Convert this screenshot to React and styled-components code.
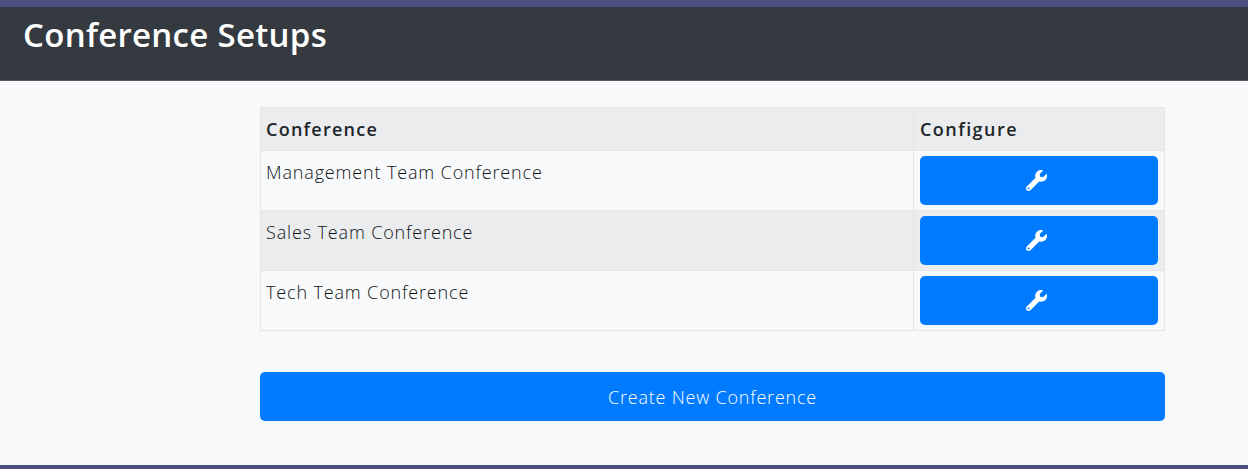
import React from "react";
import styled, { createGlobalStyle } from "styled-components";
import { FaWrench } from "react-icons/fa";

const GlobalStyle = createGlobalStyle`
    html, body {
        margin: 0;
        padding: 0;
        background: #4a4f80;
    }
    body {
        font-family: "Open Sans", "Noto Sans", sans-serif;
        color: #212529;
    }
`;

const Page = styled.div`
    width: 1248px;
    height: 469px;
    padding-top: 7px;
    box-sizing: border-box;
    background: #4a4f80;
    overflow: hidden;
`;

const Header = styled.header`
    height: 74px;
    box-sizing: border-box;
    background: #343a40;
    border-bottom: 1px solid #56595e;
    padding: 5px 0 0 23px;
    h1 {
        margin: 0;
        font-size: 33px;
        line-height: 46px;
        font-weight: 600;
        color: #fff;
        letter-spacing: 0.3px;
    }
`;

const Main = styled.main`
    height: 384px;
    box-sizing: border-box;
    background: #f8f9fa;
    padding: 26px 83px 0 260px;
`;

const Table = styled.table`
    width: 905px;
    border-collapse: collapse;
    table-layout: fixed;
    font-size: 18px;
    letter-spacing: 0.85px;
`;

const HeadCell = styled.th`
    height: 43px;
    box-sizing: border-box;
    padding: 0 ${(p) => p.$inset || "5px"};
    text-align: left;
    font-weight: 600;
    font-size: 18px;
    letter-spacing: ${(p) => p.$spacing || "1.25px"};
    background: #ebecee;
    border: 1px solid #e5e6e8;
    width: ${(p) => p.$width || "auto"};
`;

const Row = styled.tr`
    background: ${(p) => (p.$striped ? "#ebecee" : "#f8f9fa")};
`;

const NameCell = styled.td`
    height: 60px;
    box-sizing: border-box;
    padding: 8px 5px 0 5px;
    vertical-align: top;
    font-weight: 300;
    line-height: 26px;
    color: #111417;
    border: 1px solid #e5e6e8;
`;

const ActionCell = styled.td`
    height: 60px;
    box-sizing: border-box;
    padding: 5px 6px 5px 6px;
    vertical-align: top;
    border: 1px solid #e5e6e8;
`;

const Button = styled.button`
    display: flex;
    align-items: center;
    justify-content: center;
    width: 100%;
    height: 49px;
    padding: 0 ${(p) => (p.$icon ? "5px" : "0")} 0 0;
    border: none;
    border-radius: 5px;
    background: #007bff;
    color: #fff;
    font-family: inherit;
    font-size: 18px;
    font-weight: 300;
    letter-spacing: 0.8px;
    svg {
        width: 21px;
        height: 21px;
    }
`;

const CreateRow = styled.div`
    width: 905px;
    margin-top: 41px;
`;

const conferences = [
    "Management Team Conference",
    "Sales Team Conference",
    "Tech Team Conference",
];

const App = () => (
    <Page>
        <GlobalStyle />
        <Header>
            <h1>Conference Setups</h1>
        </Header>
        <Main>
            <Table>
                <thead>
                    <tr>
                        <HeadCell>Conference</HeadCell>
                        <HeadCell $width="251px" $inset="6px" $spacing="1.45px">Configure</HeadCell>
                    </tr>
                </thead>
                <tbody>
                    {conferences.map((name, i) => (
                        <Row key={name} $striped={i === 1}>
                            <NameCell>{name}</NameCell>
                            <ActionCell>
                                <Button $icon aria-label={`Configure ${name}`}>
                                    <FaWrench />
                                </Button>
                            </ActionCell>
                        </Row>
                    ))}
                </tbody>
            </Table>
            <CreateRow>
                <Button>Create New Conference</Button>
            </CreateRow>
        </Main>
    </Page>
);

export default App;
